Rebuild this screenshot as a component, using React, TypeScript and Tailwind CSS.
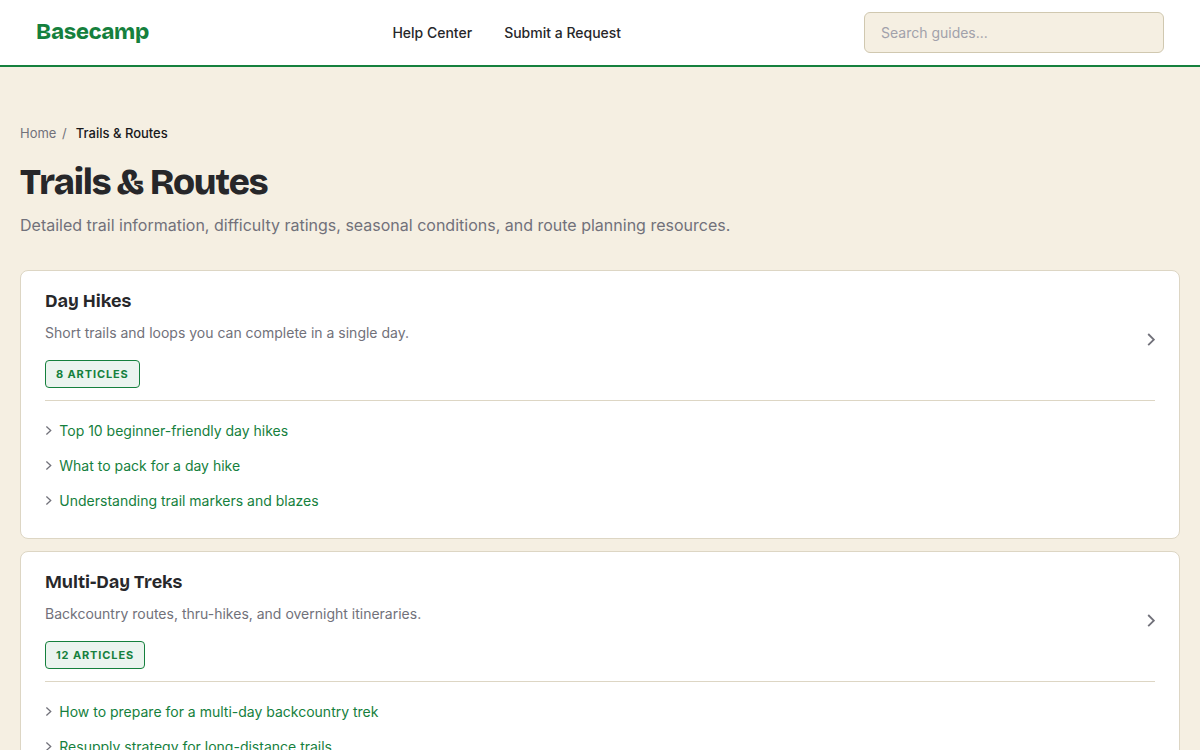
import React from 'react';

type Section = {
  title: string;
  description: string;
  count: number;
  articles: string[];
};

const sections: Section[] = [
  {
    title: 'Day Hikes',
    description: 'Short trails and loops you can complete in a single day.',
    count: 8,
    articles: [
      'Top 10 beginner-friendly day hikes',
      'What to pack for a day hike',
      'Understanding trail markers and blazes',
    ],
  },
  {
    title: 'Multi-Day Treks',
    description: 'Backcountry routes, thru-hikes, and overnight itineraries.',
    count: 12,
    articles: [
      'How to prepare for a multi-day backcountry trek',
      'Resupply strategy for long-distance trails',
    ],
  },
];

export default function App() {
  return (
    <div className="h-[750px] overflow-hidden bg-[#f5efe2] font-['Bricolage_Grotesque','Inter',sans-serif] text-[#27272a] antialiased">
      <Header />
      <main className="px-5 pt-14">
        <nav className="flex h-5 items-center font-['Inter',sans-serif] text-[13px] leading-5">
          <a href="#" className="text-[#71717a]">Home</a>
          <span className="ml-[5.5px] text-[#71717a]">/</span>
          <span className="ml-[9.2px] font-medium text-[#18181b]">Trails &amp; Routes</span>
        </nav>
        <h1 className="mt-[18px] text-[36px] leading-[44px] font-extrabold tracking-[-1.25px]">
          Trails &amp; Routes
        </h1>
        <p className="mt-2 font-['Inter',sans-serif] text-base leading-6 text-[#71717a]">
          Detailed trail information, difficulty ratings, seasonal conditions, and route planning resources.
        </p>
        <div className="mt-[33px] flex flex-col gap-3">
          {sections.map((section) => (
            <SectionCard key={section.title} section={section} />
          ))}
        </div>
      </main>
    </div>
  );
}

function Header() {
  return (
    <header className="flex h-[67px] items-center justify-between border-b-2 border-[#15803d] bg-white px-9">
      <a href="#" className="w-[113.5px] pb-0.5 text-[22px] leading-7 font-extrabold tracking-[-0.2px] whitespace-nowrap text-[#15803d]">
        Basecamp
      </a>
      <nav className="flex gap-8 font-['Inter',sans-serif] text-sm font-medium text-[#27272a]">
        <a href="#">Help Center</a>
        <a href="#">Submit a Request</a>
      </nav>
      <input
        type="text"
        placeholder="Search guides..."
        className="h-[41px] w-[300px] rounded-md border border-[#d0c8b0] bg-[#f5efe2] px-4 font-['Inter',sans-serif] text-sm placeholder:text-[#a1a1aa]"
      />
    </header>
  );
}

function SectionCard({ section }: { section: Section }) {
  return (
    <section className="rounded-lg border border-[#ddd6c4] bg-white px-6 pt-5 pb-5">
      <div className="flex items-center justify-between border-b border-[#ddd6c4] pb-3">
        <div>
          <h2 className="text-lg leading-5 font-bold tracking-[-0.05px]">{section.title}</h2>
          <p className="mt-[11px] font-['Inter',sans-serif] text-sm leading-[22px] text-[#71717a]">
            {section.description}
          </p>
          <span className="mt-4 flex h-7 w-fit items-center rounded border border-[#15803d] bg-[#ebf4ef] px-2.5 font-['Inter',sans-serif] text-[11px] font-bold tracking-[0.88px] text-[#15803d] uppercase">
            {section.count} articles
          </span>
        </div>
        <svg className="h-[13px] w-2" viewBox="0 0 8 13" fill="none" stroke="#71717a" strokeWidth="1.8">
          <path d="M1.2 1l5.6 5.6-5.6 5.6" />
        </svg>
      </div>
      <ul className="pt-3">
        {section.articles.map((article) => (
          <li key={article} className="flex h-[35px] items-center gap-[7.3px] font-['Inter',sans-serif] text-sm text-[#15803d]">
            <svg className="h-[9px] w-[7px]" viewBox="0 0 7 9" fill="none" stroke="#71717a" strokeWidth="1.3">
              <path d="M1.4.5l4.3 4-4.3 4" />
            </svg>
            <a href="#">{article}</a>
          </li>
        ))}
      </ul>
    </section>
  );
}
